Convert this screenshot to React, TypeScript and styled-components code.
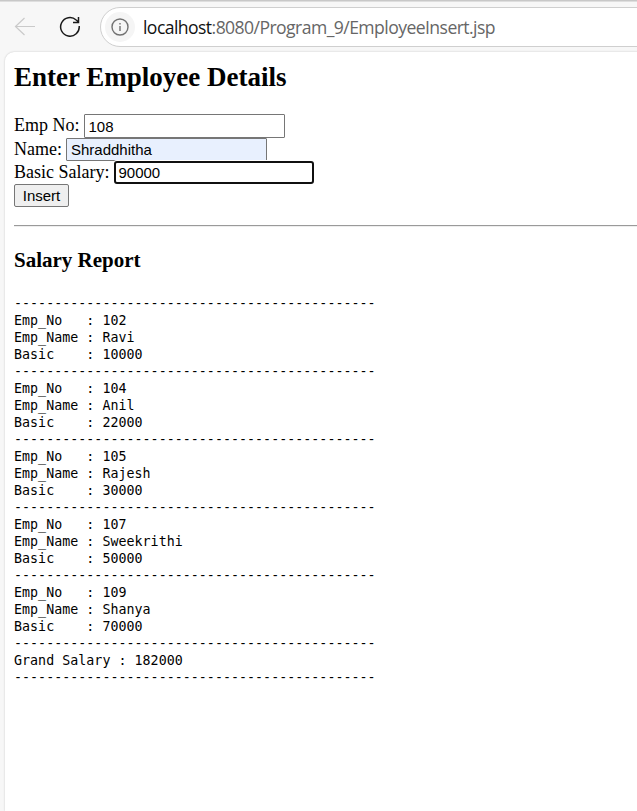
import React from "react";
import styled, { createGlobalStyle } from "styled-components";

const GlobalStyle = createGlobalStyle`
  * { box-sizing: border-box; }
  body { margin: 0; background: #f7f7f7; overflow: hidden; }
`;

const Window = styled.div`
  width: 100%;
  height: 811px;
  display: flex;
  flex-direction: column;
  overflow: hidden;
  border-top: 1px solid #c8c8c8;
  box-shadow: inset 0 1px 0 #dedede;
`;

const Toolbar = styled.header`
  height: 51px;
  flex: none;
  display: flex;
  align-items: flex-start;
  padding: 6px 0 0 14px;
`;

const NavIcon = styled.svg<{ $gap: number }>`
  flex: none;
  width: 22px;
  height: 22px;
  margin: 9px ${(p) => p.$gap}px 0 0;
  fill: none;
`;

const AddressBar = styled.div`
  flex: 1;
  height: 40px;
  margin-right: -30px;
  display: flex;
  align-items: center;
  padding-left: 4px;
  background: #fff;
  border: 1px solid #cfcfcf;
  border-radius: 20px;
`;

const SiteInfo = styled.span`
  flex: none;
  width: 30px;
  height: 30px;
  border-radius: 50%;
  background: #f5f5f5;
  display: grid;
  place-items: center;
  margin-right: 8px;
`;

const Url = styled.span`
  font: 17.6px/24px "Open Sans", "Noto Sans", sans-serif;
  letter-spacing: -0.57px;
  white-space: nowrap;
  color: #666;
`;

const Host = styled.span`
  color: #111;
`;

const Page = styled.main`
  flex: 1;
  margin-left: 5px;
  margin-right: -10px;
  padding: 10px 0 0 9px;
  background: #fff;
  border-radius: 9px 0 0 0;
  box-shadow: 0 0 2px rgba(0, 0, 0, 0.22);
  color: #000;
  font-family: "Liberation Serif", "Times New Roman", serif;
  font-size: 18px;
`;

const Title = styled.h2`
  margin: 0 0 21px;
  font-size: 27px;
  line-height: 31px;
`;

const Field = styled.label<{ $height: number }>`
  display: flex;
  align-items: center;
  gap: 4px;
  height: ${(p) => p.$height}px;
  line-height: 20px;
  white-space: nowrap;
`;

const Caption = styled.span`
  padding-bottom: 2px;
`;

const Input = styled.input<{ $state?: "filled" | "focused" }>`
  width: ${(p) => (p.$state === "focused" ? 200 : 201)}px;
  height: ${(p) => (p.$state ? 23 : 24)}px;
  margin: 0 0 0 ${(p) => (p.$state === "focused" ? 1 : 0)}px;
  padding: ${(p) => (p.$state ? "0" : "1px")} ${(p) => (p.$state === "focused" ? 2 : 4)}px
    ${(p) => (p.$state ? "1px" : "0")};
  font: 15px "Liberation Sans", Arial, sans-serif;
  color: #000;
  outline: none;
  background: ${(p) => (p.$state === "filled" ? "#e8f0fe" : "#fff")};
  border: ${(p) => (p.$state === "focused" ? "2px solid #101010" : "1px solid #767676")};
  border-radius: ${(p) => (p.$state === "focused" ? "3px" : "1px")};
  box-shadow: ${(p) => (p.$state === "focused" ? "0 0 0 1px #fff" : "none")};
`;

const InsertButton = styled.button`
  display: block;
  width: 55px;
  height: 23px;
  padding: 0;
  font: 15px "Liberation Sans", Arial, sans-serif;
  color: #000;
  background: #efefef;
  border: 1px solid #767676;
  border-radius: 2px;
`;

const Divider = styled.hr`
  height: 2px;
  margin: 18px 0 21px;
  border: 0;
  border-top: 1px solid #9a9a9a;
  border-bottom: 1px solid #eee;
`;

const Subtitle = styled.h3`
  margin: 0 0 23px;
  font-size: 21px;
  line-height: 24px;
`;

const Report = styled.pre`
  margin: 0;
  font: 13.3px/17px "DejaVu Sans Mono", monospace;
  letter-spacing: 0.03px;
`;

const employees = [
  { no: 102, name: "Ravi", basic: 10000 },
  { no: 104, name: "Anil", basic: 22000 },
  { no: 105, name: "Rajesh", basic: 30000 },
  { no: 107, name: "Sweekrithi", basic: 50000 },
  { no: 109, name: "Shanya", basic: 70000 },
];

const rule = "-".repeat(45);

const reportText = [
  ...employees.flatMap((e) => [
    rule,
    `Emp_No   : ${e.no}`,
    `Emp_Name : ${e.name}`,
    `Basic    : ${e.basic}`,
  ]),
  rule,
  "Grand Salary : 182000",
  rule,
].join("\n");

export default function App() {
  return (
    <>
      <GlobalStyle />
      <Window>
        <Toolbar>
          <NavIcon $gap={23} viewBox="0 0 22 22" stroke="#cacaca" strokeWidth="1.2">
            <path d="M21 10.5H1.5M10.5 2L1.5 10.5L10.5 19" />
          </NavIcon>
          <NavIcon $gap={19} viewBox="0 0 22 22" stroke="#1a1a1a" strokeWidth="1.5">
            <path d="M20.2 10a9.3 9.3 0 1 1-3-6L19.5 6M19.5 1v5.5H14" />
          </NavIcon>
          <AddressBar>
            <SiteInfo>
              <svg width="18" height="18" viewBox="0 0 18 18" fill="none" stroke="#717171" strokeWidth="1.4">
                <circle cx="9" cy="9" r="8" />
                <path d="M9 8v5M9 5v1.6" />
              </svg>
            </SiteInfo>
            <Url>
              <Host>localhost</Host>:8080/Program_9/EmployeeInsert.jsp
            </Url>
          </AddressBar>
        </Toolbar>
        <Page>
          <Title>Enter Employee Details</Title>
          <Field $height={24}>
            <Caption>Emp No:</Caption>
            <Input defaultValue="108" />
          </Field>
          <Field $height={23}>
            <Caption>Name:</Caption>
            <Input $state="filled" defaultValue="Shraddhitha" />
          </Field>
          <Field $height={23}>
            <Caption>Basic Salary:</Caption>
            <Input $state="focused" defaultValue="90000" />
          </Field>
          <InsertButton>Insert</InsertButton>
          <Divider />
          <Subtitle>Salary Report</Subtitle>
          <Report>{reportText}</Report>
        </Page>
      </Window>
    </>
  );
}
